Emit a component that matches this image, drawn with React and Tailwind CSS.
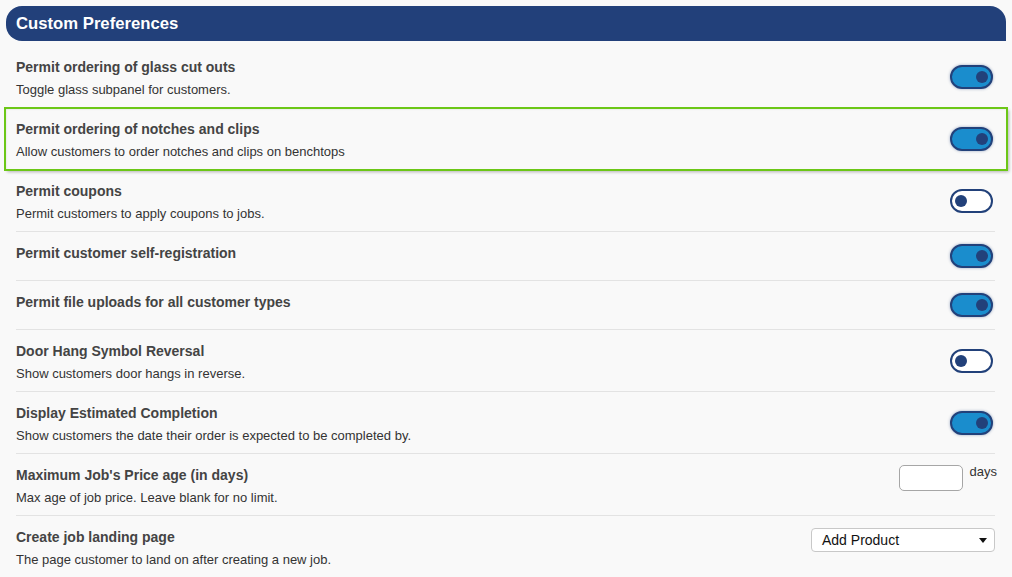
import React from "react";

const rows = [
  { title: "Permit ordering of glass cut outs", desc: "Toggle glass subpanel for customers.", type: "toggle", on: true },
  { title: "Permit ordering of notches and clips", desc: "Allow customers to order notches and clips on benchtops", type: "toggle", on: true, highlight: true },
  { title: "Permit coupons", desc: "Permit customers to apply coupons to jobs.", type: "toggle", on: false },
  { title: "Permit customer self-registration", type: "toggle", on: true },
  { title: "Permit file uploads for all customer types", type: "toggle", on: true },
  { title: "Door Hang Symbol Reversal", desc: "Show customers door hangs in reverse.", type: "toggle", on: false },
  { title: "Display Estimated Completion", desc: "Show customers the date their order is expected to be completed by.", type: "toggle", on: true },
  { title: "Maximum Job's Price age (in days)", desc: "Max age of job price. Leave blank for no limit.", type: "days" },
  { title: "Create job landing page", desc: "The page customer to land on after creating a new job.", type: "select", last: true },
];

function Toggle({ on }) {
  return (
    <div
      className={
        "mr-[2px] flex h-[24px] w-[43px] items-center rounded-full border-2 border-[#22417a] px-[3px] " +
        (on
          ? "justify-end bg-[#1a8dcd] shadow-[0_0_3px_rgba(34,65,122,0.45)]"
          : "justify-start bg-white")
      }
    >
      <div className="h-[12px] w-[12px] rounded-full bg-[#22417a]" />
    </div>
  );
}

function Row({ r }) {
  const bordered = !(r.highlight || r.last);
  const inner = (
    <div
      className={
        "ml-[10px] mr-[11px] flex " +
        (r.type === "toggle" ? "items-center " : "items-start ") +
        (bordered ? "border-b border-[#e3e3e3]" : "")
      }
    >
      <div
        className={
          "flex-1 pt-[11px] " +
          (r.desc ? (bordered ? "pb-[7px]" : "pb-[8px]") : "pb-[17px]")
        }
      >
        <div className="text-[14px] font-bold leading-[20px] text-[#444]">{r.title}</div>
        {r.desc && (
          <div className="mt-[3px] text-[13px] leading-[20px] text-[#333]">{r.desc}</div>
        )}
      </div>
      {r.type === "toggle" && <Toggle on={r.on} />}
      {r.type === "days" && (
        <div className="mr-[-2px] flex items-start pt-[11px]">
          <div className="h-[26px] w-[64px] rounded-[5px] border border-[#a6a6a6] bg-white" />
          <span className="ml-[7px] text-[13px] leading-[14px] text-[#333]">days</span>
        </div>
      )}
      {r.type === "select" && (
        <div className="pt-[12px]">
          <div className="flex h-[24px] w-[184px] items-center justify-between rounded-[4px] border border-[#c8c8c8] bg-white pl-[10px] pr-[7px] text-[14px] text-[#111]">
            <span>Add Product</span>
            <svg width="8" height="5" viewBox="0 0 8 5">
              <path d="M0 0 L8 0 L4 5 Z" fill="#111" />
            </svg>
          </div>
        </div>
      )}
    </div>
  );
  if (r.highlight) {
    return (
      <div className="relative mx-[-1px] outline-2 outline-offset-[-1px] outline-[#6cc717] shadow-[2px_2px_3px_rgba(0,0,0,0.28),inset_1px_1px_2px_rgba(0,0,0,0.15)]">
        <div className="mx-[1px]">{inner}</div>
      </div>
    );
  }
  return inner;
}

export default function App() {
  return (
    <div
      className="min-h-screen bg-[#f9f9f9] px-[6px] pt-[6px]"
      style={{ fontFamily: '"Liberation Sans", Arial, sans-serif' }}
    >
      <div className="flex h-[35px] items-center rounded-tl-[16px] rounded-tr-[16px] rounded-bl-[16px] bg-[#22407a] pl-[10px] text-[16.7px] font-bold text-white">
        Custom Preferences
      </div>
      <div className="pt-[5px]">
        {rows.map((r, i) => (
          <Row key={i} r={r} />
        ))}
      </div>
    </div>
  );
}
